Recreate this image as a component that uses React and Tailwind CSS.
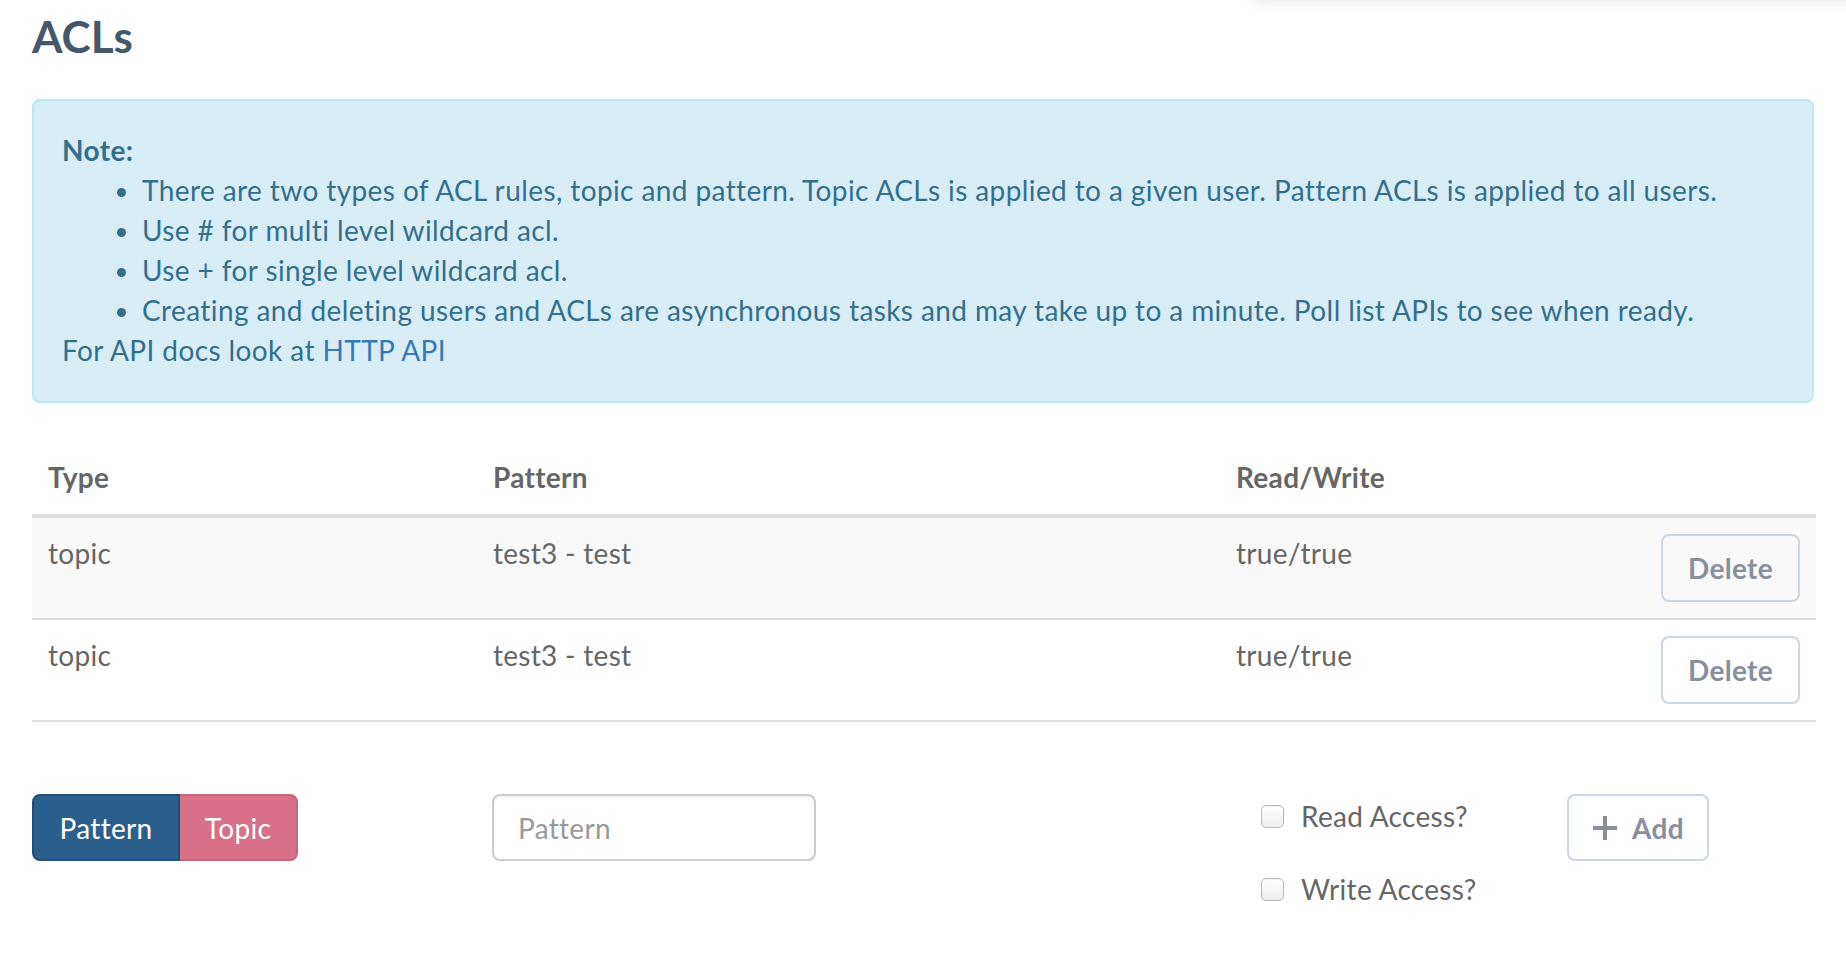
import { Fragment } from 'react';

const font = { fontFamily: 'Lato, "Open Sans", sans-serif' };

const PlusIcon = () => (
  <svg width="26" height="26" viewBox="0 0 26 26" fill="currentColor">
    <rect x="11" y="1" width="4" height="24" />
    <rect x="1" y="11" width="24" height="4" />
  </svg>
);

const rows = [
  { type: 'topic', pattern: 'test3 - test', rw: 'true/true' },
  { type: 'topic', pattern: 'test3 - test', rw: 'true/true' },
];

const Checkbox = ({ label }) => (
  <label className="flex items-center h-[40px] text-[28px] leading-[40px] text-[#666]">
    <span className="w-[23px] h-[23px] rounded-[5px] border border-[#b8b8b8] bg-gradient-to-b from-white to-[#ededed] shadow-[inset_0_1px_1px_rgba(0,0,0,0.05)]" />
    <span className="ml-[17px]">{label}</span>
  </label>
);

export default function App() {
  return (
    <div className="relative min-h-screen bg-white px-[32px] overflow-hidden tracking-[0.3px]" style={font}>
      <div className="absolute top-[-40px] left-[1250px] right-[-20px] h-[40px] rounded-[8px] shadow-[0_2px_14px_rgba(0,0,0,0.09)]" />

      <h1 className="mt-[10px] text-[44px] leading-[52px] font-bold tracking-normal text-[#455869]">ACLs</h1>

      <div className="mt-[37px] rounded-[8px] border-2 border-[#bce8f1] bg-[#d9edf7] px-[28px] pt-[29px] pb-[31px] text-[28px] leading-[40px] text-[#31708f] tracking-[0.4px]">
        <p className="font-bold">Note:</p>
        <ul className="list-disc pl-[80px]">
          <li>There are two types of ACL rules, topic and pattern. Topic ACLs is applied to a given user. Pattern ACLs is applied to all users.</li>
          <li>Use # for multi level wildcard acl.</li>
          <li>Use + for single level wildcard acl.</li>
          <li>Creating and deleting users and ACLs are asynchronous tasks and may take up to a minute. Poll list APIs to see when ready.</li>
        </ul>
        <p>
          For API docs look at <a className="text-[#337ab7]">HTTP API</a>
        </p>
      </div>

      <div className="mt-[39px] grid grid-cols-[445px_743px_425px_1fr] text-[28px] leading-[40px] text-[#666]">
        <div className="px-[16px] pt-[15px] pb-[17px] font-bold border-b-4 border-[#ddd]">Type</div>
        <div className="px-[16px] pt-[15px] pb-[17px] font-bold border-b-4 border-[#ddd]">Pattern</div>
        <div className="px-[16px] pt-[15px] pb-[17px] font-bold border-b-4 border-[#ddd]">Read/Write</div>
        <div className="px-[16px] pt-[15px] pb-[17px] border-b-4 border-[#ddd]" />
        {rows.map((r, i) => {
          const bg = i % 2 === 0 ? 'bg-[#f9f9f9]' : 'bg-white';
          return (
            <Fragment key={i}>
              <div className={`px-[16px] pt-[15px] pb-[17px] border-b-2 border-[#ddd] ${bg}`}>{r.type}</div>
              <div className={`px-[16px] pt-[15px] pb-[17px] border-b-2 border-[#ddd] ${bg}`}>{r.pattern}</div>
              <div className={`px-[16px] pt-[15px] pb-[17px] border-b-2 border-[#ddd] ${bg}`}>{r.rw}</div>
              <div className={`flex justify-end px-[16px] py-[16px] border-b-2 border-[#ddd] ${bg}`}>
                <button className="h-[68px] w-[139px] rounded-[8px] border-2 border-[#ccd6e4] bg-transparent text-[28px] font-bold text-[#8a8f9c]">
                  Delete
                </button>
              </div>
            </Fragment>
          );
        })}
      </div>

      <div className="mt-[72px] flex items-start">
        <div className="w-[460px] flex">
          <button className="h-[67px] w-[148px] rounded-l-[8px] border-2 border-[#214f7a] bg-[#2b5f8e] text-[28px] text-white">
            Pattern
          </button>
          <button className="h-[67px] w-[118px] rounded-r-[8px] border-2 border-l-0 border-[#c7647e] bg-[#d9708a] text-[28px] text-white">
            Topic
          </button>
        </div>
        <div className="w-[324px] h-[67px] rounded-[8px] border-2 border-[#ccc] flex items-center pl-[24px] text-[28px] text-[#999] shadow-[inset_0_2px_2px_rgba(0,0,0,0.06)]">
          Pattern
        </div>
        <div className="ml-[445px] w-[306px] pt-[2px] flex flex-col gap-[33px]">
          <Checkbox label="Read Access?" />
          <Checkbox label="Write Access?" />
        </div>
        <button className="h-[67px] w-[142px] rounded-[8px] border-2 border-[#ccd6e4] flex items-center justify-center gap-[14px] text-[28px] font-bold text-[#8a8f9c]">
          <PlusIcon />
          <span>Add</span>
        </button>
      </div>
    </div>
  );
}
